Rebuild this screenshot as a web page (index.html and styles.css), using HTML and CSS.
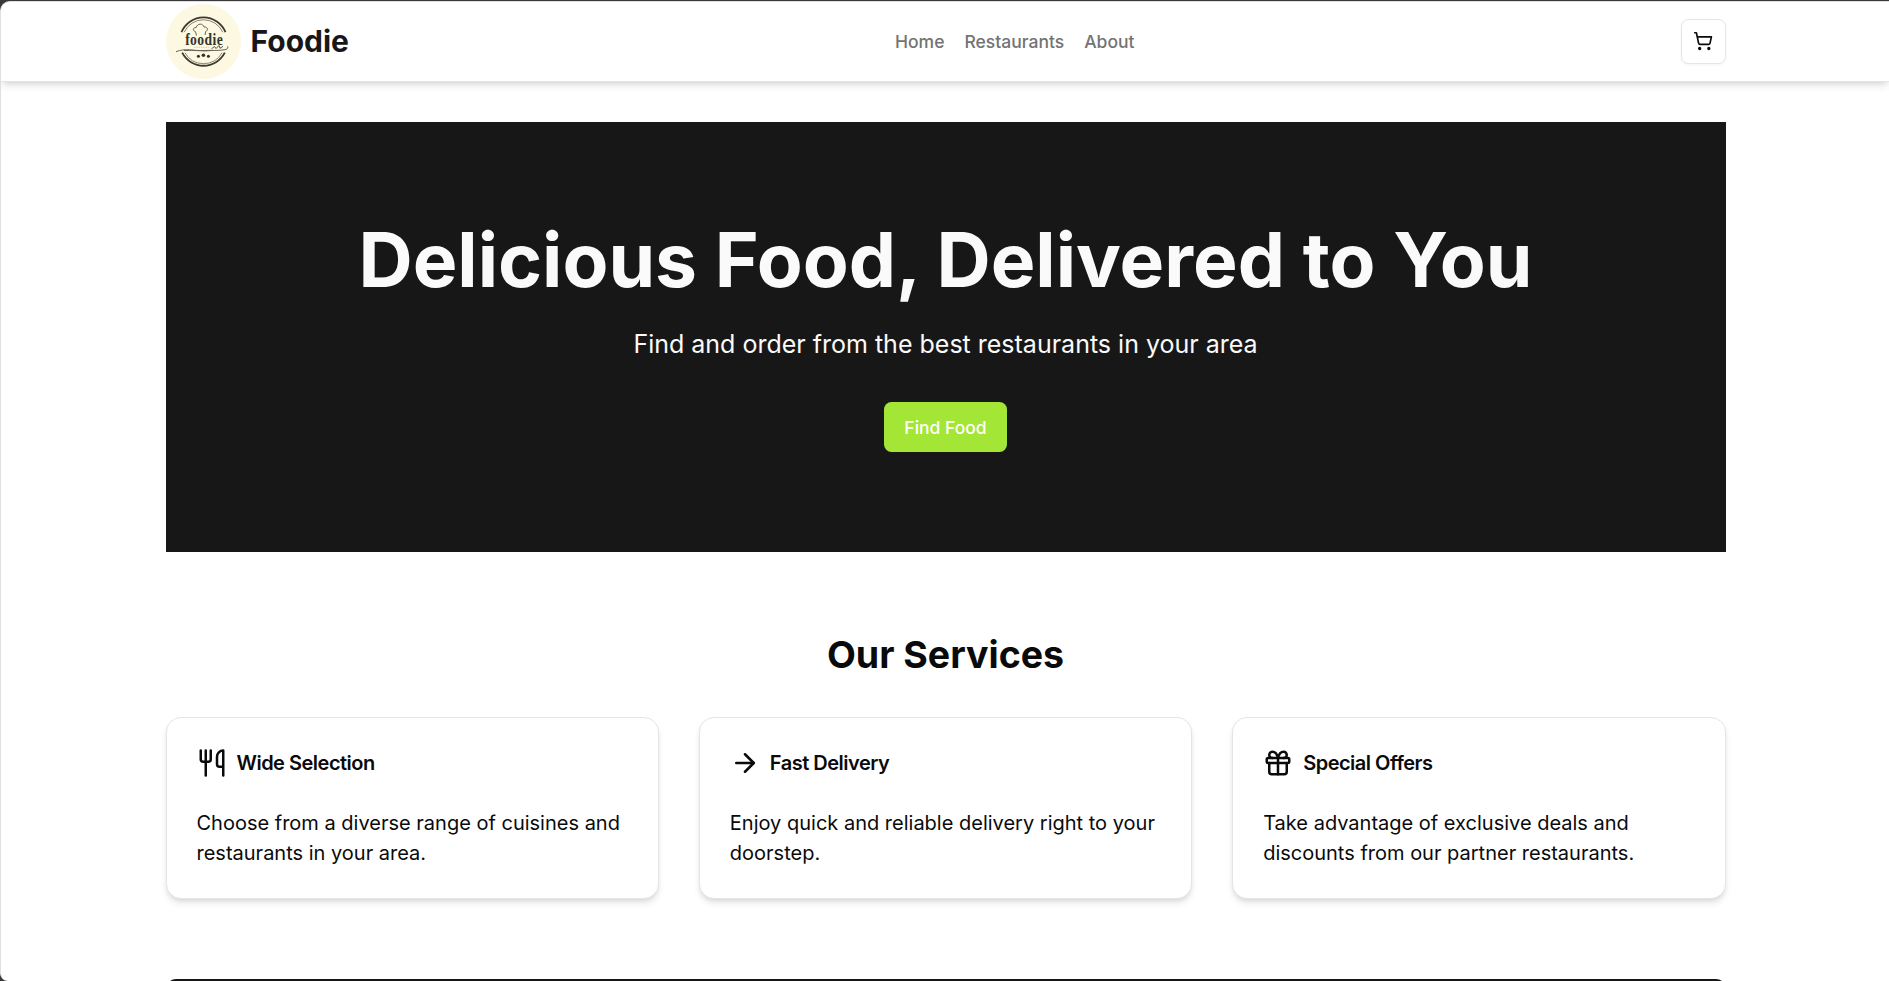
FILE: index.html
```html
<!DOCTYPE html>
<html lang="en">
<head>
<meta charset="utf-8">
<title>Foodie</title>
<link rel="stylesheet" href="styles.css">
</head>
<body>
<div class="window">
  <header class="header">
    <a class="brand">
      <svg class="logo" viewBox="0 0 75 75" fill="none">
        <circle cx="37.5" cy="37.5" r="37.5" fill="#fdf8e1"/>
        <g stroke="#3a3a2e">
          <path d="M15.500 28.200a23.700 23.700 0 0 1 44 0M16.200 48.700a23.900 23.900 0 0 0 42.600 0" stroke-width="1.800"/>
          <path d="M18.200 28.200a21.200 21.200 0 0 1 38.600 0M19 48.800a21.200 21.200 0 0 0 37 0" stroke-width=".9" stroke="#77766a"/>
          <path d="M30.500 31.500l-1-3.800c-3.200-.8-2.600-4.500.7-4.200 1-4.400 7-4.400 7.800-.5 4-.3 4.500 3.500 1.600 4.500l-.5 3.500" stroke-width="1" stroke="#66655a"/>
          <path d="M10 47.700c10-4 17-.6 27-1.200 9-.4 15 .6 23-1 2-.8 2.500-2.500 1.400-3.200M18 46.600c10-1.200 19 1.400 29-.2" stroke-width="1" stroke="#66655a"/>
          <path d="M45.500 44.800l3-2.300 1.500 2 3-3 1 2.800 3-2" stroke-width="1" stroke="#55544a"/>
          <path d="M28 43.300h15" stroke="#d8cfae" stroke-width="1" stroke-dasharray="1.500 .8"/>
        </g>
        <text class="logo-text" transform="translate(19.200 41) scale(.8 1)">foodie</text>
        <g fill="#33332b">
          <circle cx="32.400" cy="52.300" r="1.500"/><circle cx="37.400" cy="51.300" r="1.800"/><circle cx="42.400" cy="52.300" r="1.500"/>
        </g>
      </svg>
      <span class="brand-name">Foodie</span>
    </a>
    <nav class="nav"><a>Home</a><a>Restaurants</a><a>About</a></nav>
    <button class="cart" aria-label="Cart">
      <svg class="icon cart-icon" viewBox="0 0 24 24"><circle cx="8" cy="21" r="1"/><circle cx="19" cy="21" r="1"/><path d="M2.050 2.050h2l2.660 12.420a2 2 0 0 0 2 1.580h9.780a2 2 0 0 0 1.950-1.570l1.650-7.430H5.120"/></svg>
    </button>
  </header>
  <main class="main">
    <section class="hero">
      <h1 class="hero-title">Delicious Food, Delivered to You</h1>
      <p class="hero-text">Find and order from the best restaurants in your area</p>
      <button class="hero-button">Find Food</button>
    </section>
    <section class="services">
      <h2 class="services-title">Our Services</h2>
      <div class="cards">
        <article class="card">
          <h3 class="card-title"><svg class="icon" viewBox="0 0 24 24"><path d="M3 2v7c0 1.100.9 2 2 2h4a2 2 0 0 0 2-2V2"/><path d="M7 2v20"/><path d="M21 15V2a5 5 0 0 0-5 5v6c0 1.100.9 2 2 2h3Zm0 0v7"/></svg><span>Wide Selection</span></h3>
          <p class="card-text">Choose from a diverse range of cuisines and restaurants in your area.</p>
        </article>
        <article class="card">
          <h3 class="card-title"><svg class="icon" viewBox="0 0 24 24"><path d="M5 12h14"/><path d="m12 5 7 7-7 7"/></svg><span>Fast Delivery</span></h3>
          <p class="card-text">Enjoy quick and reliable delivery right to your doorstep.</p>
        </article>
        <article class="card">
          <h3 class="card-title"><svg class="icon" viewBox="0 0 24 24"><rect x="3" y="8" width="18" height="4" rx="1"/><path d="M12 8v13"/><path d="M19 12v7a2 2 0 0 1-2 2H7a2 2 0 0 1-2-2v-7"/><path d="M7.500 8a2.500 2.500 0 0 1 0-5A4.800 8 0 0 1 12 8a4.800 8 0 0 1 4.500-5 2.500 2.500 0 0 1 0 5"/></svg><span>Special Offers</span></h3>
          <p class="card-text">Take advantage of exclusive deals and discounts from our partner restaurants.</p>
        </article>
      </div>
    </section>
    <section class="banner"></section>
  </main>
</div>
</body>
</html>
```

FILE: styles.css
```css
* { box-sizing: border-box; margin: 0; padding: 0; }
body {
  height: 981px;
  padding-top: 1px;
  overflow: hidden;
  background: #3a383b;
  color: #0a0a0a;
  font-family: Inter, "Liberation Sans", sans-serif;
}
.window {
  height: 980px;
  overflow: hidden;
  background: #fff;
  border: solid #e0e0e0;
  border-width: 1px 0 0 1px;
  border-radius: 10px 0 0 8px;
}
.header {
  display: flex;
  align-items: center;
  justify-content: space-between;
  height: 80px;
  padding: 0 163.500px 1px 164.500px;
  background: #fff;
  border-bottom: 1px solid #e5e5e5;
  box-shadow: 0 5px 7.5px -1.25px rgba(0, 0, 0, .1), 0 2.5px 5px -2.5px rgba(0, 0, 0, .1);
}
.brand { display: flex; align-items: center; gap: 10px; }
.logo { width: 75px; height: 75px; }
.logo-text { font: bold 17px "Liberation Serif", serif; letter-spacing: .5px; fill: #33332b; }
.brand-name { font-size: 30px; line-height: 40px; font-weight: 700; color: #171717; }
.nav { display: flex; gap: 20px; font-size: 17.5px; line-height: 25px; font-weight: 500; color: #737373; }
.icon {
  width: 30px;
  height: 30px;
  flex: none;
  fill: none;
  stroke: currentColor;
  stroke-width: 2;
  stroke-linecap: round;
  stroke-linejoin: round;
}
.cart {
  display: flex;
  align-items: center;
  justify-content: center;
  width: 45px;
  height: 45px;
  color: #0a0a0a;
  background: #fff;
  border: 1px solid #e5e5e5;
  border-radius: 7.5px;
  box-shadow: 0 1px 2.5px rgba(0, 0, 0, .05);
}
.cart-icon { width: 20px; height: 20px; }
.main { padding: 40px 163.500px 0 164.500px; }
.hero {
  display: flex;
  flex-direction: column;
  align-items: center;
  padding: 100px 0;
  background: #171717;
  color: #fafafa;
}
.hero-title { font-size: 75px; line-height: 75px; font-weight: 700; }
.hero-text { margin: 30px 0 40px; font-size: 25px; line-height: 35px; }
.hero-button {
  height: 50px;
  padding: 0 20px;
  border: 0;
  border-radius: 7.5px;
  background: #a3e635;
  color: #fff;
  font: 500 17.5px/25px Inter, sans-serif;
}
.services { padding: 80px 0; }
.services-title { margin-bottom: 40px; text-align: center; font-size: 37.5px; line-height: 45px; font-weight: 700; }
.cards { display: grid; grid-template-columns: repeat(3, 1fr); gap: 40px; }
.card {
  padding: 30px;
  border: 1px solid #e5e5e5;
  border-radius: 15px;
  background: #fff;
  box-shadow: 0 5px 7.5px -1.25px rgba(0, 0, 0, .1), 0 2.5px 5px -2.5px rgba(0, 0, 0, .1);
}
.card-title { display: flex; align-items: center; gap: 10px; margin-bottom: 30px; font-size: 20px; line-height: 30px; font-weight: 600; letter-spacing: -.025em; }
.card-text { font-size: 20px; line-height: 30px; }
.banner { height: 300px; border-radius: 10px; background: #171717; }
```
